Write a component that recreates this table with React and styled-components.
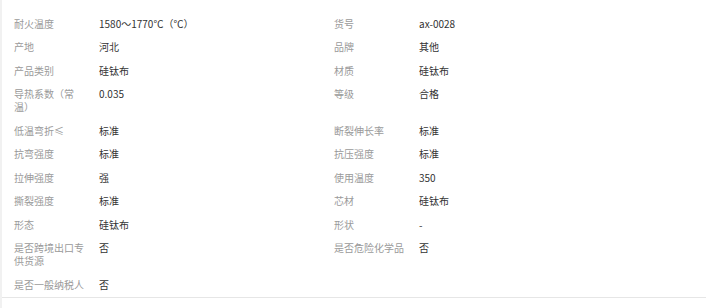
import styled, { createGlobalStyle } from 'styled-components';

const GlobalStyle = createGlobalStyle`
  html, body {
    margin: 0;
    padding: 0;
    background: #fff;
  }
  body {
    font-family: "Noto Sans CJK SC", "Noto Sans", "Liberation Sans", sans-serif;
  }
`;

const Panel = styled.div`
  height: 308px;
  border-left: 2px solid #f1f1f1;
  box-sizing: border-box;
`;

const AttrGrid = styled.div`
  display: grid;
  grid-template-columns: 320px 320px;
  padding: 11px 0 1.5px 12px;
  border-bottom: 1px solid #e6e6e6;
`;

const Item = styled.div`
  display: flex;
  align-items: flex-start;
  padding: 5.5px 0 5px;
  font-size: 10px;
  line-height: 13px;
`;

const Label = styled.div`
  width: 85px;
  flex-shrink: 0;
  padding-right: 13px;
  box-sizing: border-box;
  color: #9a9a9a;
`;

const Value = styled.div`
  flex: 1;
  color: #333;
`;

const attrs = [
  ['耐火温度', '1580～1770℃（℃）'],
  ['货号', 'ax-0028'],
  ['产地', '河北'],
  ['品牌', '其他'],
  ['产品类别', '硅钛布'],
  ['材质', '硅钛布'],
  ['导热系数（常温）', '0.035'],
  ['等级', '合格'],
  ['低温弯折≤', '标准'],
  ['断裂伸长率', '标准'],
  ['抗弯强度', '标准'],
  ['抗压强度', '标准'],
  ['拉伸强度', '强'],
  ['使用温度', '350'],
  ['撕裂强度', '标准'],
  ['芯材', '硅钛布'],
  ['形态', '硅钛布'],
  ['形状', '-'],
  ['是否跨境出口专供货源', '否'],
  ['是否危险化学品', '否'],
  ['是否一般纳税人', '否'],
];

const App = () => {
  return (
    <>
      <GlobalStyle />
      <Panel>
        <AttrGrid>
          {attrs.map(([k, v]) => (
            <Item key={k}>
              <Label>{k}</Label>
              <Value>{v}</Value>
            </Item>
          ))}
        </AttrGrid>
      </Panel>
    </>
  );
};

export default App;
